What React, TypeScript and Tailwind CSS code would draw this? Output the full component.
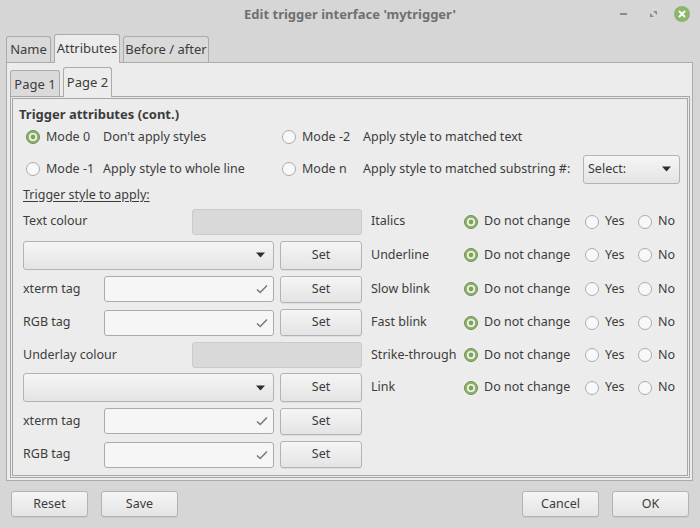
import React from "react";

const Radio = ({ checked = false }: { checked?: boolean }) => (
  <svg width="14" height="14" viewBox="0 0 14 14" className="shrink-0">
    {checked ? (
      <>
        <circle cx="7" cy="7" r="6.5" fill="#8fb26e" stroke="#6f9150" />
        <circle cx="7" cy="7" r="4" fill="#f4f7f0" />
        <circle cx="7" cy="7" r="2.4" fill="#7fa35d" />
      </>
    ) : (
      <circle cx="7" cy="7" r="6.5" fill="#f8f8f8" stroke="#ababab" />
    )}
  </svg>
);

const Btn = ({ label, className = "" }: { label: string; className?: string }) => (
  <div
    className={`flex items-center justify-center rounded-[3px] border border-[#b3b3b3] bg-gradient-to-b from-[#f5f5f5] to-[#e4e4e4] text-[#3c3c3c] shadow-[0_1px_0_rgba(0,0,0,0.06)] ${className}`}
  >
    {label}
  </div>
);

const Arrow = () => (
  <svg width="9" height="6" viewBox="0 0 9 6">
    <path d="M0 0.5 L9 0.5 L4.5 5.5 Z" fill="#2e2e2e" />
  </svg>
);

const Check = () => (
  <svg width="12" height="10" viewBox="0 0 12 10">
    <path d="M1 5.5 L4.2 8.5 L11 1.5" fill="none" stroke="#7a7a7a" strokeWidth="1.6" />
  </svg>
);

const Combo = ({ className = "" }: { className?: string }) => (
  <div
    className={`flex items-center justify-end rounded-[3px] border border-[#b3b3b3] bg-gradient-to-b from-[#f5f5f5] to-[#e4e4e4] pr-[8px] ${className}`}
  >
    <Arrow />
  </div>
);

const Entry = () => (
  <div className="flex h-[26px] w-[170px] items-center justify-end rounded-[3px] border border-[#ababab] bg-[#f6f6f6] pr-[5px]">
    <Check />
  </div>
);

const Disabled = () => (
  <div className="h-[26px] w-[170px] rounded-[3px] border border-[#cbcbcb] bg-[#d9d9d9]" />
);

const leftRows = [
  { kind: "field", label: "Text colour" },
  { kind: "combo" },
  { kind: "entry", label: "xterm tag" },
  { kind: "entry", label: "RGB tag" },
  { kind: "field", label: "Underlay colour" },
  { kind: "combo" },
  { kind: "entry", label: "xterm tag" },
  { kind: "entry", label: "RGB tag" },
];

const rightLabels = ["Italics", "Underline", "Slow blink", "Fast blink", "Strike-through", "Link"];
const rowHeights = ["h-[33px]", "h-[34px]", "h-[34px]", "h-[33px]", "h-[32px]", "h-[33px]", "h-[34px]", "h-[33px]"];

export default function App() {
  return (
    <div
      className="flex h-[528px] w-[700px] flex-col bg-[#d6d6d6] text-[12.5px] text-[#3c3c3c]"
      style={{ fontFamily: '"Noto Sans", "DejaVu Sans", sans-serif' }}
    >
      {/* title bar */}
      <div className="relative flex h-[28px] shrink-0 items-center justify-center pt-[2px]">
        <span className="text-[13px] font-bold text-[#707070]">Edit trigger interface 'mytrigger'</span>
        <div className="absolute left-[620px] top-[13px] h-[2px] w-[7px] bg-[#8c8c8c]" />
        <svg width="7" height="6" viewBox="0 0 7 6" className="absolute left-[650px] top-[11px]">
          <path d="M3 0 L7 0 L7 4 Z M0 2 L0 6 L4 6 Z" fill="#8c8c8c" />
        </svg>
        <div className="absolute left-[674px] top-[6px] flex h-[16px] w-[16px] items-center justify-center rounded-full bg-[#8db56c]">
          <svg width="8" height="8" viewBox="0 0 8 8">
            <path d="M1 1 L7 7 M7 1 L1 7" stroke="#fff" strokeWidth="1.8" />
          </svg>
        </div>
      </div>

      {/* outer tabs */}
      <div className="mt-[6px] flex h-[28px] items-end pl-[6px]">
        <div className="flex h-[26px] w-[45px] items-center justify-center rounded-t-[3px] border border-b-0 border-[#ababab] bg-[#dadada] text-[13px]">
          Name
        </div>
        <div className="relative z-10 -mb-px ml-[3px] flex h-[29px] w-[66px] items-start justify-center rounded-t-[3px] border border-b-0 border-[#ababab] bg-[#ececec] pt-[4px] text-[13px]">
          Attributes
        </div>
        <div className="ml-[3px] flex h-[26px] w-[86px] items-center justify-center rounded-t-[3px] border border-b-0 border-[#ababab] bg-[#dadada] text-[13px]">
          Before / after
        </div>
      </div>

      {/* outer pane */}
      <div className="mx-[6px] flex h-[419px] w-[687px] flex-col border border-[#ababab] bg-[#ececec] px-[3px] pt-[3px]">
        {/* inner tabs */}
        <div className="flex h-[30px] items-end">
          <div className="flex h-[26px] w-[50px] items-center justify-center rounded-t-[3px] border border-b-0 border-[#ababab] bg-[#dadada] pt-[2px] text-[13px]">
            Page 1
          </div>
          <div className="relative z-10 -mb-px ml-[3px] flex h-[30px] w-[49px] items-start justify-center rounded-t-[3px] border border-b-0 border-[#ababab] bg-[#ececec] pt-[5px] text-[13px]">
            Page 2
          </div>
        </div>

        {/* inner pane */}
        <div className="h-[382px] w-[680px] border border-[#a6a6a6] bg-[#ececec] p-px">
          <div className="flex h-full w-full flex-col border border-[#a6a6a6] pl-[6px] pt-[6px]">
            <div className="flex h-[20px] items-center text-[13px] font-bold">Trigger attributes (cont.)</div>

            <div className="flex h-[24px] items-center pl-[7px]">
              <Radio checked />
              <span className="ml-[6px] w-[57px]">Mode 0</span>
              <span className="w-[179px]">Don't apply styles</span>
              <Radio />
              <span className="ml-[6px] w-[61px]">Mode -2</span>
              <span>Apply style to matched text</span>
            </div>

            <div className="mt-[8px] flex h-[24px] items-center pl-[7px]">
              <Radio />
              <span className="ml-[6px] w-[57px]">Mode -1</span>
              <span className="w-[179px]">Apply style to whole line</span>
              <Radio />
              <span className="ml-[6px] w-[61px]">Mode n</span>
              <span className="w-[220px]">Apply style to matched substring #:</span>
              <div className="flex h-[29px] w-[97px] items-center justify-between rounded-[3px] border border-[#b3b3b3] bg-gradient-to-b from-[#f5f5f5] to-[#e4e4e4] pl-[4px] pr-[8px]">
                <span>Select:</span>
                <Arrow />
              </div>
            </div>

            <div className="mt-[4px] flex h-[20px] items-center pl-[4px]">
              <span className="underline underline-offset-2">Trigger style to apply:</span>
            </div>

            <div className="flex flex-col">
              {leftRows.map((row, i) => (
                <div key={i} className={`flex items-center ${rowHeights[i]}`}>
                  <div className="flex w-[343px] items-center justify-between pl-[4px]">
                    {row.kind === "combo" ? (
                      <>
                        <Combo className="h-[29px] w-[251px]" />
                        <Btn label="Set" className="h-[29px] w-[82px]" />
                      </>
                    ) : row.kind === "entry" ? (
                      <>
                        <span>{row.label}</span>
                        <div className="flex items-center gap-[6px]">
                          <Entry />
                          <Btn label="Set" className="h-[27px] w-[82px]" />
                        </div>
                      </>
                    ) : (
                      <>
                        <span>{row.label}</span>
                        <Disabled />
                      </>
                    )}
                  </div>
                  {i < rightLabels.length && (
                    <div className="ml-[9px] flex items-center">
                      <span className="w-[93px]">{rightLabels[i]}</span>
                      <div className="flex w-[121px] items-center">
                        <Radio checked />
                        <span className="ml-[6px]">Do not change</span>
                      </div>
                      <div className="flex w-[53px] items-center">
                        <Radio />
                        <span className="ml-[6px]">Yes</span>
                      </div>
                      <div className="flex items-center">
                        <Radio />
                        <span className="ml-[6px]">No</span>
                      </div>
                    </div>
                  )}
                </div>
              ))}
            </div>
          </div>
        </div>
      </div>

      {/* bottom buttons */}
      <div className="mt-[10px] flex items-center px-[11px]">
        <Btn label="Reset" className="h-[26px] w-[77px]" />
        <Btn label="Save" className="ml-[13px] h-[26px] w-[77px]" />
        <div className="flex-1" />
        <Btn label="Cancel" className="h-[26px] w-[77px]" />
        <Btn label="OK" className="ml-[13px] h-[26px] w-[77px]" />
      </div>
    </div>
  );
}
